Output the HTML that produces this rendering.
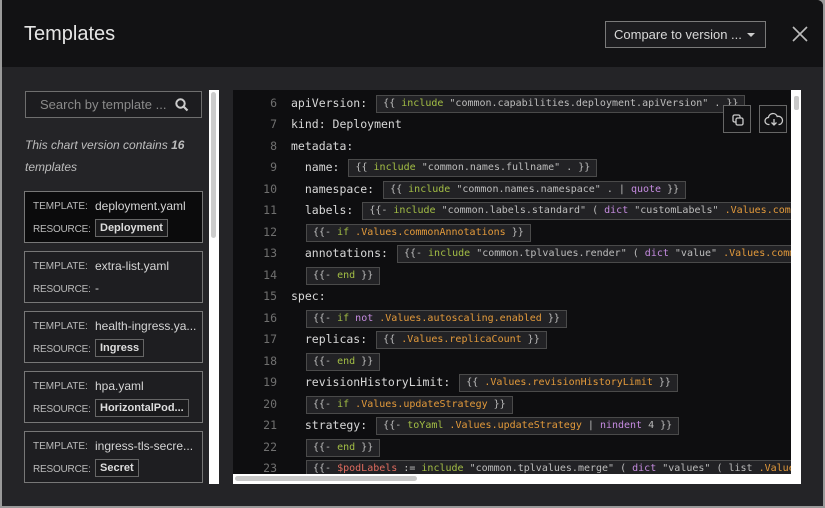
<!DOCTYPE html>
<html><head><meta charset="utf-8"><style>
*{box-sizing:border-box;margin:0;padding:0}
body{width:825px;height:508px;background:#9a9a9a;overflow:hidden;font-family:"Liberation Sans",sans-serif}
.win{position:absolute;left:2px;top:0;width:821px;height:506px;background:#242427;border-radius:0 6px 0 0;overflow:hidden}
.hdr{position:absolute;left:0;top:0;width:821px;height:67px;background:#121214}
.title{position:absolute;left:22px;top:23px;font-size:20px;color:#e6e6e6}
.cmp{position:absolute;left:603px;top:21px;width:161px;height:27px;border:1px solid #7a7a7a;background:#1c1c1f;color:#d8d8d8;font-size:13px;padding:5px 0 0 8px}
.cmp:after{content:"";position:absolute;right:10px;top:11px;border:4px solid transparent;border-top:4px solid #ccc}
.x{position:absolute;left:790px;top:26px}
.search{position:absolute;left:23px;top:91px;width:177px;height:27px;border:1px solid #6e6e6e;background:#1c1c1f;color:#8a8a8a;font-size:13px;padding:5px 0 0 14px}
.info{position:absolute;left:23px;top:134px;width:180px;font-size:12px;font-style:italic;color:#bdbdbd;line-height:22px}
.card{position:absolute;left:22px;width:179px;height:52px;border:1px solid #777;background:#1e1e21;font-size:10px;color:#bbb}
.card .l{position:absolute;left:8px}
.card .l.r2{letter-spacing:-0.2px}
.card .v{position:absolute;left:70px;color:#d5d5d5;font-size:12px}
.card .b{position:absolute;left:70px;top:27px;border:1px solid #666;padding:2px 4px;font-weight:bold;color:#ddd;font-size:11px;background:#1a1a1c}
.sb{position:absolute;left:207px;top:90px;width:10px;height:394px;background:#fff}
.sb i{position:absolute;left:2px;top:2px;width:5px;height:146px;background:#ccc;border-radius:3px}
.code{position:absolute;left:231px;top:90px;width:568px;height:394px;background:#fff}
.ci{position:absolute;left:0;top:0;width:558px;height:384px;background:#0e0e10;overflow:hidden;font-family:"DejaVu Sans Mono","Liberation Mono",monospace;font-size:11.5px;color:#d8d8d8}
.ln{position:absolute;height:21px;white-space:pre;line-height:16px}
.n{position:absolute;left:0;width:44px;text-align:right;color:#707070}
.t{position:absolute;left:58px}
.bx{display:inline-block;border:1px solid #4a4a4a;background:#222225;padding:0 6px;color:#bdbdbd;margin-left:9px;line-height:16px;font-size:10px;vertical-align:top}
.g{color:#a3be45}.o{color:#e39a3b}.p{color:#c58be0}.r{color:#e06c5f}
.btn{position:absolute;top:15px;width:28px;height:28px;border:1px solid #666;background:#121214}
.vs{position:absolute;left:559px;top:0;width:9px;height:384px;background:#fff}
.vs i{position:absolute;left:2px;top:6px;width:5px;height:14px;background:#c8c8c8;border-radius:2px}
.hs{position:absolute;left:0;top:384px;width:568px;height:10px;background:#fff}
.hs i{position:absolute;left:2px;top:2px;width:182px;height:5px;background:#c8c8c8;border-radius:3px}
</style></head><body><div class="win">
<div class="hdr"><div class="title">Templates</div>
<div class="cmp">Compare to version ...</div>
<svg class="x" width="16" height="16" viewBox="0 0 16 16"><path d="M1 1L15 15M15 1L1 15" stroke="#bbb" stroke-width="1.6"/></svg></div>
<div class="search">Search by template ...
<svg style="position:absolute;right:12px;top:6px" width="14" height="14" viewBox="0 0 14 14"><circle cx="5.5" cy="5.5" r="4.2" stroke="#ccc" stroke-width="2" fill="none"/><path d="M8.5 8.5L12.5 12.5" stroke="#ccc" stroke-width="2.2"/></svg></div>
<div class="info">This chart version contains <b>16</b> templates</div>
<div class="card" style="top:191px;background:#0b0b0c"><span class="l" style="top:9px">TEMPLATE:</span><span class="v" style="top:7px">deployment.yaml</span><span class="l r2" style="top:32px">RESOURCE:</span><span class="b">Deployment</span></div>
<div class="card" style="top:251px"><span class="l" style="top:9px">TEMPLATE:</span><span class="v" style="top:7px">extra-list.yaml</span><span class="l r2" style="top:32px">RESOURCE:</span><span class="v" style="top:29px">-</span></div>
<div class="card" style="top:311px"><span class="l" style="top:9px">TEMPLATE:</span><span class="v" style="top:7px">health-ingress.ya...</span><span class="l r2" style="top:32px">RESOURCE:</span><span class="b">Ingress</span></div>
<div class="card" style="top:371px"><span class="l" style="top:9px">TEMPLATE:</span><span class="v" style="top:7px">hpa.yaml</span><span class="l r2" style="top:32px">RESOURCE:</span><span class="b">HorizontalPod...</span></div>
<div class="card" style="top:431px"><span class="l" style="top:9px">TEMPLATE:</span><span class="v" style="top:7px">ingress-tls-secre...</span><span class="l r2" style="top:32px">RESOURCE:</span><span class="b">Secret</span></div>
<div class="sb"><i></i></div>
<div class="code"><div class="ci">
<div class="ln" style="top:5px"><span class="n">6</span><span class="t">apiVersion:<span class="bx">{{ <span class="g">include</span> "common.capabilities.deployment.apiVersion" . }}</span></span></div>
<div class="ln" style="top:26px"><span class="n">7</span><span class="t">kind: Deployment</span></div>
<div class="ln" style="top:48px"><span class="n">8</span><span class="t">metadata:</span></div>
<div class="ln" style="top:69px"><span class="n">9</span><span class="t">  name:<span class="bx">{{ <span class="g">include</span> "common.names.fullname" . }}</span></span></div>
<div class="ln" style="top:91px"><span class="n">10</span><span class="t">  namespace:<span class="bx">{{ <span class="g">include</span> "common.names.namespace" . | <span class="p">quote</span> }}</span></span></div>
<div class="ln" style="top:112px"><span class="n">11</span><span class="t">  labels:<span class="bx">{{- <span class="g">include</span> "common.labels.standard" ( <span class="p">dict</span> "customLabels" <span class="o">.Values.commonLabels</span> ) }}</span></span></div>
<div class="ln" style="top:134px"><span class="n">12</span><span class="t" style="left:73px"><span class="bx" style="margin:0">{{- <span class="g">if</span> <span class="o">.Values.commonAnnotations</span> }}</span></span></div>
<div class="ln" style="top:155px"><span class="n">13</span><span class="t">  annotations:<span class="bx">{{- <span class="g">include</span> "common.tplvalues.render" ( <span class="p">dict</span> "value" <span class="o">.Values.commonAnnotations</span> ) }}</span></span></div>
<div class="ln" style="top:177px"><span class="n">14</span><span class="t" style="left:73px"><span class="bx" style="margin:0">{{- <span class="g">end</span> }}</span></span></div>
<div class="ln" style="top:198px"><span class="n">15</span><span class="t">spec:</span></div>
<div class="ln" style="top:220px"><span class="n">16</span><span class="t" style="left:73px"><span class="bx" style="margin:0">{{- <span class="g">if</span> <span class="p">not</span> <span class="o">.Values.autoscaling.enabled</span> }}</span></span></div>
<div class="ln" style="top:241px"><span class="n">17</span><span class="t">  replicas:<span class="bx">{{ <span class="o">.Values.replicaCount</span> }}</span></span></div>
<div class="ln" style="top:263px"><span class="n">18</span><span class="t" style="left:73px"><span class="bx" style="margin:0">{{- <span class="g">end</span> }}</span></span></div>
<div class="ln" style="top:284px"><span class="n">19</span><span class="t">  revisionHistoryLimit:<span class="bx">{{ <span class="o">.Values.revisionHistoryLimit</span> }}</span></span></div>
<div class="ln" style="top:306px"><span class="n">20</span><span class="t" style="left:73px"><span class="bx" style="margin:0">{{- <span class="g">if</span> <span class="o">.Values.updateStrategy</span> }}</span></span></div>
<div class="ln" style="top:327px"><span class="n">21</span><span class="t">  strategy:<span class="bx">{{- <span class="g">toYaml</span> <span class="o">.Values.updateStrategy</span> | <span class="p">nindent</span> 4 }}</span></span></div>
<div class="ln" style="top:349px"><span class="n">22</span><span class="t" style="left:73px"><span class="bx" style="margin:0">{{- <span class="g">end</span> }}</span></span></div>
<div class="ln" style="top:370px"><span class="n">23</span><span class="t" style="left:73px"><span class="bx" style="margin:0">{{- <span class="r">$podLabels</span> := <span class="g">include</span> "common.tplvalues.merge" ( <span class="p">dict</span> "values" ( list <span class="o">.Values.podLabels</span> ) ) }}</span></span></div>
<div class="btn" style="left:490px"><svg width="28" height="28" viewBox="0 0 28 28"><rect x="9" y="9" width="7" height="7" rx="1.5" fill="none" stroke="#ccc" stroke-width="1.3"/><rect x="12" y="12" width="7" height="7" rx="1.5" fill="#121214" stroke="#ccc" stroke-width="1.3"/></svg></div>
<div class="btn" style="left:526px"><svg width="28" height="28" viewBox="0 0 28 28"><path d="M9.5 18.5h-1a3.5 3.5 0 0 1 0-7 4.5 4.5 0 0 1 8.7-1 3.5 3.5 0 0 1 2.3 8h-1" fill="none" stroke="#ccc" stroke-width="1.3"/><path d="M14 13v6M11.5 16.5L14 19l2.5-2.5" fill="none" stroke="#ccc" stroke-width="1.3"/></svg></div>
</div>
<div class="vs"><i></i></div><div class="hs"><i></i></div></div>
</div></body></html>
